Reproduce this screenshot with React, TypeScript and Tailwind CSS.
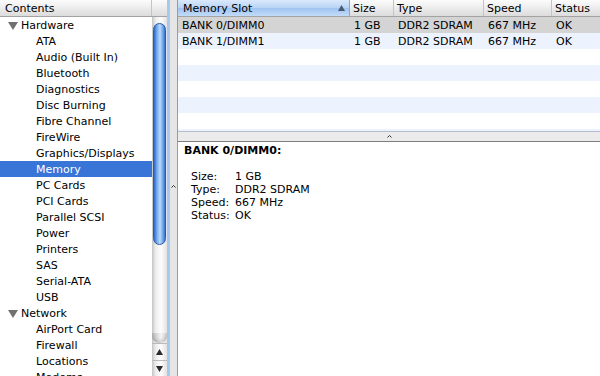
import React from "react";

type Item = { label: string; group?: boolean; selected?: boolean };

const contents: Item[] = [
  { label: "Hardware", group: true },
  { label: "ATA" },
  { label: "Audio (Built In)" },
  { label: "Bluetooth" },
  { label: "Diagnostics" },
  { label: "Disc Burning" },
  { label: "Fibre Channel" },
  { label: "FireWire" },
  { label: "Graphics/Displays" },
  { label: "Memory", selected: true },
  { label: "PC Cards" },
  { label: "PCI Cards" },
  { label: "Parallel SCSI" },
  { label: "Power" },
  { label: "Printers" },
  { label: "SAS" },
  { label: "Serial-ATA" },
  { label: "USB" },
  { label: "Network", group: true },
  { label: "AirPort Card" },
  { label: "Firewall" },
  { label: "Locations" },
  { label: "Modems" },
];

const slots = [
  { slot: "BANK 0/DIMM0", size: "1 GB", type: "DDR2 SDRAM", speed: "667 MHz", status: "OK" },
  { slot: "BANK 1/DIMM1", size: "1 GB", type: "DDR2 SDRAM", speed: "667 MHz", status: "OK" },
];

// zebra rows of the empty table below the data
const filler = [2, 3, 4, 5, 6, 7];

const Disclosure = () => (
  <svg width="10" height="9" viewBox="0 0 10 9" className="ml-[8px] mr-[3px] shrink-0">
    <polygon points="0,1 10,1 5,9" fill="#707070" />
  </svg>
);

const Dimple = () => (
  <svg width="5" height="3" viewBox="0 0 5 3">
    <polyline points="0.5,2.5 2.5,0.5 4.5,2.5" fill="none" stroke="#333" strokeWidth="1" />
  </svg>
);

export default function App() {
  return (
    <div className="flex h-[376px] w-[600px] overflow-hidden bg-white text-[11px] leading-none text-black font-['DejaVu_Sans',sans-serif]">
      {/* Contents outline */}
      <div className="flex w-[167px] shrink-0 flex-col">
        <div className="flex h-[17px] shrink-0 border-b border-[#a3a3a3] bg-gradient-to-b from-[#fcfcfc] to-[#dcdcdc]">
          <div className="flex w-[152px] items-center border-r border-[#c4c4c4] pl-[5px]">Contents</div>
          <div className="flex-1" />
        </div>
        <div className="flex min-h-0 flex-1">
          <div className="w-[152px] overflow-hidden">
            {contents.map((it) => (
              <div
                key={it.label}
                className={
                  it.selected
                    ? "flex h-[16px] items-center bg-[#3875d7] pl-[36px] text-white"
                    : it.group
                    ? "flex h-[16px] items-center"
                    : "flex h-[16px] items-center pl-[36px]"
                }
              >
                {it.group && <Disclosure />}
                {it.label}
              </div>
            ))}
          </div>
          {/* Aqua scroll bar */}
          <div className="flex w-[15px] flex-col bg-[linear-gradient(to_right,#c4c4c4,#eeeeee_25%,#fdfdfd_60%,#e2e2e2)]">
            <div className="mx-[1px] mt-[6px] h-[222px] rounded-[7px] border border-[#2c5aa3] bg-[linear-gradient(to_right,#2d68c4,#78adee_28%,#bcdafb_55%,#6aa2ea_82%,#3473cf)]" />
            <div className="flex-1" />
            <div className="h-[10px] rounded-b-[7px] bg-[linear-gradient(to_right,#b5b5b5,#e0e0e0_40%,#f4f4f4_60%,#cfcfcf)] shadow-[inset_0_-3px_3px_rgba(0,0,0,0.12)]" />
            <div className="flex h-[17px] items-center justify-center border-t border-[#b9b9b9]">
              <svg width="7" height="6" viewBox="0 0 7 6"><polygon points="3.5,0 7,6 0,6" fill="#2a2a2a" /></svg>
            </div>
            <div className="flex h-[16px] items-center justify-center border-t border-[#b9b9b9]">
              <svg width="7" height="6" viewBox="0 0 7 6"><polygon points="0,0 7,0 3.5,6" fill="#2a2a2a" /></svg>
            </div>
          </div>
        </div>
      </div>

      {/* focus ring edge */}
      <div className="w-[3px] shrink-0 bg-[#a9c8ee]" />

      {/* vertical split */}
      <div className="flex w-[7px] shrink-0 flex-col items-center bg-[#e6e6e6]">
        <div className="mt-[185px]">
          <Dimple />
        </div>
      </div>

      {/* Right side */}
      <div className="flex min-w-0 flex-1 flex-col border-l border-[#9a9a9a]">
        <div className="flex h-[132px] shrink-0 flex-col overflow-hidden border-b border-[#b6bccb]">
          <div className="flex h-[17px] shrink-0 border-b border-[#a3a3a3] bg-gradient-to-b from-[#fcfcfc] to-[#dcdcdc]">
            <div className="flex w-[172px] items-center border-r border-[#8aa6cf] bg-[linear-gradient(to_bottom,#dbe9fb,#b7d3f5_50%,#9fc3f0_51%,#c2dbf8)] pl-[5px]">
              <span className="flex-1">Memory Slot</span>
              <svg width="7" height="6" viewBox="0 0 7 6" className="mr-[4px]"><polygon points="3.5,0 7,6 0,6" fill="#4a5a70" /></svg>
            </div>
            <div className="flex w-[44px] items-center border-r border-[#c4c4c4] pl-[3px]">Size</div>
            <div className="flex w-[90px] items-center border-r border-[#c4c4c4] pl-[3px]">Type</div>
            <div className="flex w-[68px] items-center border-r border-[#c4c4c4] pl-[3px]">Speed</div>
            <div className="flex flex-1 items-center pl-[3px]">Status</div>
          </div>
          {slots.map((s, i) => (
            <div key={s.slot} className={i === 0 ? "flex h-[16px] shrink-0 items-center bg-[#d4d4d4]" : "flex h-[16px] shrink-0 items-center bg-[#edf3fe]"}>
              <div className="w-[172px] pl-[4px]">{s.slot}</div>
              <div className="w-[44px] pl-[4px]">{s.size}</div>
              <div className="w-[90px] pl-[4px]">{s.type}</div>
              <div className="w-[68px] pl-[4px]">{s.speed}</div>
              <div className="flex-1 pl-[4px]">{s.status}</div>
            </div>
          ))}
          {filler.map((n) => (
            <div key={n} className={n % 2 === 0 ? "h-[16px] shrink-0 bg-white" : "h-[16px] shrink-0 bg-[#edf3fe]"} />
          ))}
        </div>

        {/* horizontal split */}
        <div className="flex h-[10px] shrink-0 items-center justify-center border-b border-[#7d7d7d] bg-[#ebebeb]">
          <Dimple />
        </div>

        {/* details */}
        <div className="flex-1 pl-[6px] pt-[2px] leading-[13px]">
          <div className="font-bold">BANK 0/DIMM0:</div>
          <div className="h-[13px]" />
          <div className="grid grid-cols-[44px_auto] pl-[7px]">
            <div>Size:</div>
            <div>1 GB</div>
            <div>Type:</div>
            <div>DDR2 SDRAM</div>
            <div>Speed:</div>
            <div>667 MHz</div>
            <div>Status:</div>
            <div>OK</div>
          </div>
        </div>
      </div>
    </div>
  );
}
